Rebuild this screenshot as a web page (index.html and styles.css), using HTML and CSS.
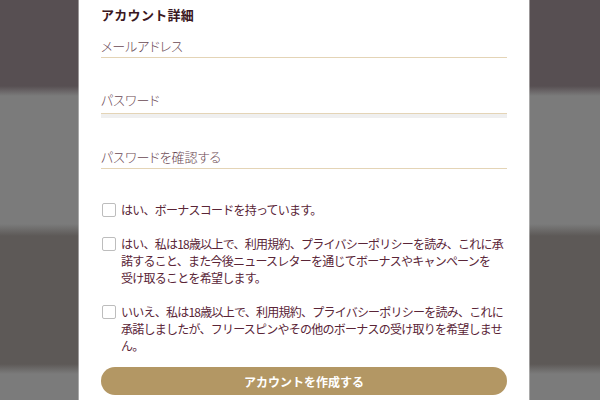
FILE: index.html
```html
<!DOCTYPE html>
<html lang="ja">
<head>
<meta charset="utf-8">
<title>アカウント詳細</title>
<link rel="stylesheet" href="styles.css">
</head>
<body>
<div class="backdrop">
  <main class="modal">
    <h2 class="title">アカウント詳細</h2>
    <div class="field field-email">メールアドレス</div>
    <div class="field field-pass">パスワード</div>
    <div class="strength"></div>
    <div class="field field-confirm">パスワードを確認する</div>

    <label class="check check-first">
      <span class="box"></span>
      <span class="text">はい、ボーナスコードを持っています。</span>
    </label>
    <label class="check">
      <span class="box"></span>
      <span class="text">はい、私は18歳以上で、利用規約、プライバシーポリシーを読み、これに承諾すること、また今後ニュースレターを通じてボーナスやキャンペーンを<span class="nowrap">受け取ること</span>を希望します。</span>
    </label>
    <label class="check">
      <span class="box"></span>
      <span class="text">いいえ、私は18歳以上で、利用規約、プライバシーポリシーを読み、これに承諾しましたが、フリースピンやその他のボーナスの受け取りを希望しません。</span>
    </label>

    <button class="submit">アカウントを作成する</button>
  </main>
</div>
</body>
</html>
```
FILE: styles.css
```css
html, body {
  margin: 0;
  padding: 0;
  height: 100%;
  overflow: hidden;
}
body {
  font-family: "Noto Sans CJK JP", "Noto Sans", sans-serif;
  background: linear-gradient(to bottom,
    #574f52 0px, #574f52 86px, #7b7b7b 96px, #7b7b7b 224px,
    #5d5957 236px, #5d5957 364px, #7b7b7b 374px, #7b7b7b 400px);
}
.backdrop {
  height: 100%;
}
.modal {
  margin-left: 79px;
  width: 450px;
  min-height: 100%;
  box-sizing: border-box;
  background: #fff;
  padding: 5px 22px 0 22px;
  box-shadow: 0 0 0 1px rgba(200, 200, 200, 0.6);
  display: flex;
  flex-direction: column;
}
.title {
  margin: 0;
  font-size: 13px;
  line-height: 20px;
  font-weight: 700;
  color: #3a1721;
  letter-spacing: 0.3px;
}
.field {
  font-size: 13px;
  line-height: 20px;
  font-weight: 300;
  color: #6a4853;
  font-feature-settings: "palt";
  border-bottom: 1px solid #e4d4b6;
  padding-bottom: 1px;
}
.field-email {
  margin-top: 11px;
}
.field-pass {
  margin-top: 32px;
  padding-bottom: 3px;
}
.strength {
  height: 4px;
  background: #efefef;
}
.field-confirm {
  margin-top: 29px;
}
.check {
  display: flex;
  gap: 5px;
  align-items: flex-start;
  margin-top: 17px;
  font-size: 12px;
  line-height: 17px;
  letter-spacing: -0.76px;
  color: #5a2537;
}
.check-first {
  margin-top: 32px;
}
.nowrap {
  white-space: nowrap;
}
.box {
  flex: none;
  width: 12px;
  height: 12px;
  border: 1px solid #bdbdbd;
  border-radius: 2px;
  margin-top: 2px;
  margin-left: 1px;
  background: #fff;
}
.text {
  flex: 1;
}
.submit {
  margin-top: 13px;
  height: 28px;
  border: none;
  border-radius: 14px;
  background: #b39764;
  color: #fff;
  font-family: inherit;
  font-size: 12px;
  font-weight: 700;
  padding: 0;
}
```
